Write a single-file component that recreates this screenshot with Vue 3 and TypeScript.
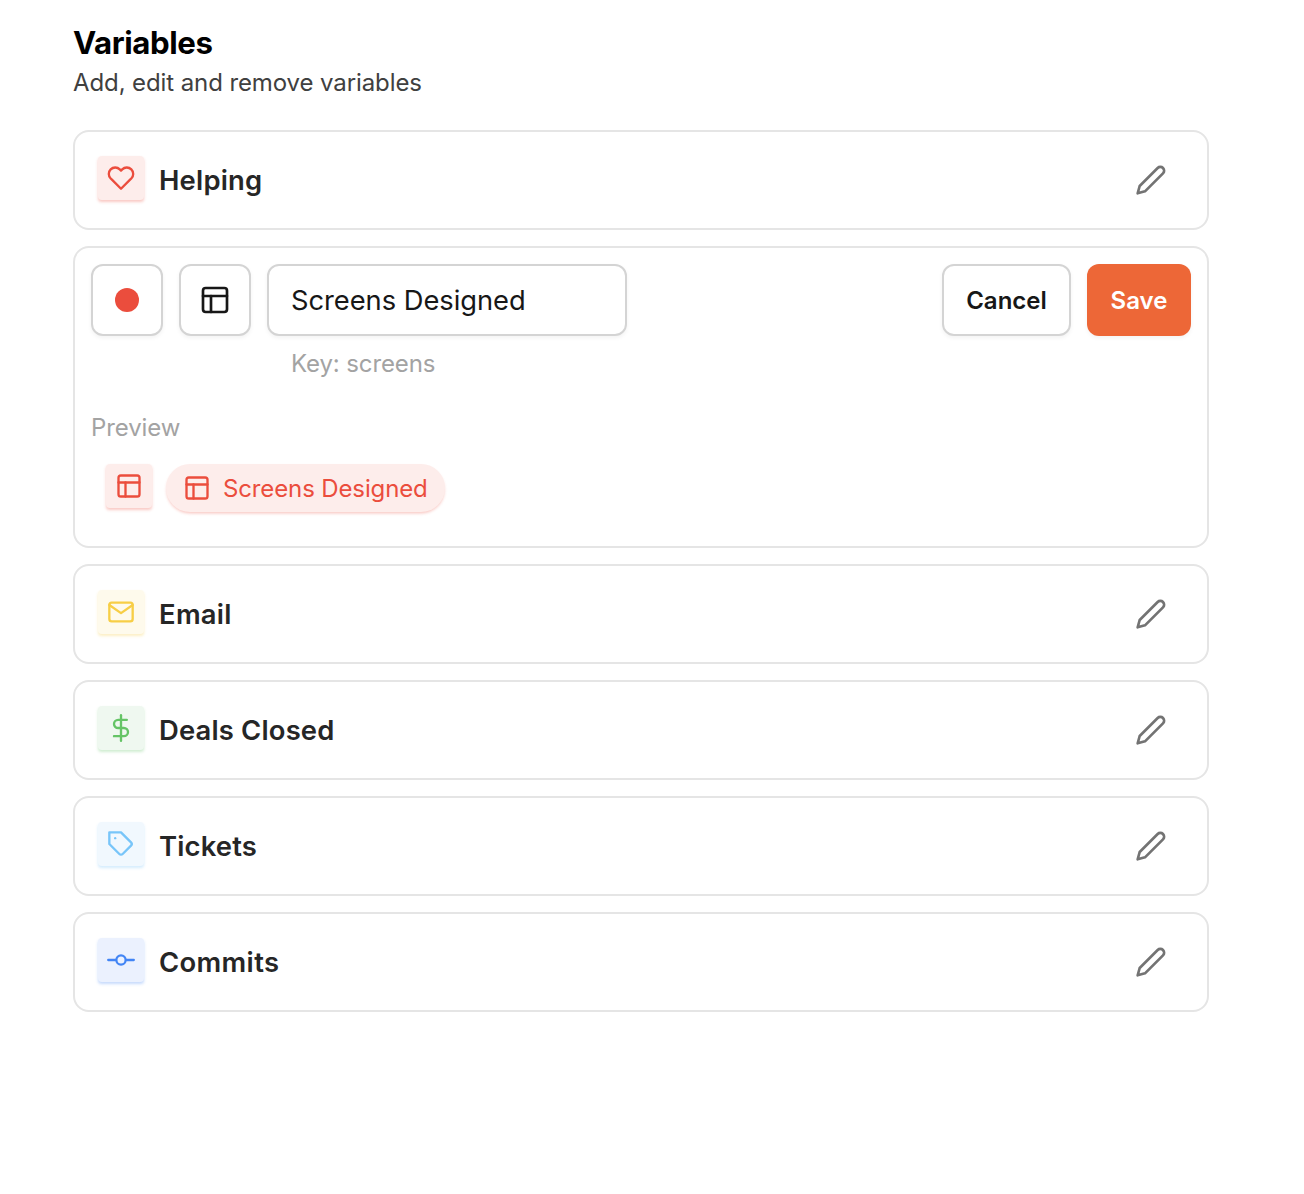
<script setup lang="ts">
import { ref } from 'vue'

type IconName = 'heart' | 'layout' | 'mail' | 'dollar' | 'tag' | 'commit' | 'pencil'

interface Variable {
  key: string
  label: string
  icon: IconName
  tone: string
  spacing: string
}

const icons: Record<IconName, string[]> = {
  heart: [
    'M20.84 4.61a5.5 5.5 0 0 0-7.78 0L12 5.67l-1.06-1.06a5.5 5.5 0 0 0-7.78 7.78l1.06 1.06L12 21.23l7.78-7.78 1.06-1.06a5.5 5.5 0 0 0 0-7.78z',
  ],
  layout: [
    'M5 3h14a2 2 0 0 1 2 2v14a2 2 0 0 1-2 2H5a2 2 0 0 1-2-2V5a2 2 0 0 1 2-2z',
    'M3 9h18',
    'M9 21V9',
  ],
  mail: [
    'M4 4h16c1.1 0 2 .9 2 2v12c0 1.1-.9 2-2 2H4c-1.1 0-2-.9-2-2V6c0-1.1.9-2 2-2z',
    'M22 6l-10 7L2 6',
  ],
  dollar: ['M12 1v22', 'M17 5H9.5a3.5 3.5 0 0 0 0 7h5a3.5 3.5 0 0 1 0 7H6'],
  tag: [
    'M20.59 13.41l-7.17 7.17a2 2 0 0 1-2.83 0L2 12V2h10l8.59 8.59a2 2 0 0 1 0 2.82z',
    'M7 7h.01',
  ],
  commit: ['M8 12a4 4 0 1 0 8 0a4 4 0 1 0-8 0', 'M1.05 12H7', 'M17.01 12h5.95'],
  pencil: ['M17 3a2.828 2.828 0 1 1 4 4L7.5 20.5 2 22l1.5-5.5L17 3z'],
}

const variables: Variable[] = [
  { key: 'helping', label: 'Helping', icon: 'heart', tone: 'red', spacing: '0.2px' },
  { key: 'screens', label: 'Screens Designed', icon: 'layout', tone: 'red', spacing: '0px' },
  { key: 'email', label: 'Email', icon: 'mail', tone: 'yellow', spacing: '0.3px' },
  { key: 'deals', label: 'Deals Closed', icon: 'dollar', tone: 'green', spacing: '0.17px' },
  { key: 'tickets', label: 'Tickets', icon: 'tag', tone: 'sky', spacing: '0.15px' },
  { key: 'commits', label: 'Commits', icon: 'commit', tone: 'blue', spacing: '0.36px' },
]

const editing = ref('screens')
const draft = ref('Screens Designed')
</script>

<template>
  <main class="page">
    <h1 class="title">Variables</h1>
    <p class="subtitle">Add, edit and remove variables</p>

    <div class="list">
      <template v-for="v in variables" :key="v.key">
        <section v-if="v.key === editing" class="card editor">
          <div class="controls">
            <button class="field square" aria-label="Color"><span class="dot"></span></button>
            <button class="field square" aria-label="Icon">
              <svg class="icon big" viewBox="0 0 24 24"><path v-for="d in icons[v.icon]" :key="d" :d="d" /></svg>
            </button>
            <input v-model="draft" class="field name" type="text" />
            <button class="field cancel">Cancel</button>
            <button class="save" @click="editing = ''">Save</button>
          </div>
          <p class="key">Key: {{ v.key }}</p>
          <p class="preview-label">Preview</p>
          <div class="preview">
            <span class="badge" :class="v.tone">
              <svg class="icon" viewBox="0 0 24 24"><path v-for="d in icons[v.icon]" :key="d" :d="d" /></svg>
            </span>
            <span class="pill" :class="v.tone">
              <svg class="icon" viewBox="0 0 24 24"><path v-for="d in icons[v.icon]" :key="d" :d="d" /></svg>
              <span>{{ draft }}</span>
            </span>
          </div>
        </section>

        <section v-else class="card row">
          <span class="badge" :class="v.tone">
            <svg class="icon" viewBox="0 0 24 24"><path v-for="d in icons[v.icon]" :key="d" :d="d" /></svg>
          </span>
          <h2 class="label" :style="{ letterSpacing: v.spacing }">{{ v.label }}</h2>
          <button class="edit" aria-label="Edit" @click="editing = v.key">
            <svg class="icon big" viewBox="0 0 24 24"><path v-for="d in icons.pencil" :key="d" :d="d" /></svg>
          </button>
        </section>
      </template>
    </div>
  </main>
</template>

<style>
body {
  margin: 0;
  background: #fff;
}
</style>

<style scoped>
* {
  box-sizing: border-box;
}
.page {
  width: 1304px;
  min-height: 1194px;
  padding: 23px 95px 0 73px;
  font-family: Inter, 'Liberation Sans', sans-serif;
  color: #171717;
}
h1,
h2,
p {
  margin: 0;
}
button,
input {
  font: inherit;
  color: inherit;
  background: none;
  border: 0;
  padding: 0;
  margin: 0;
}
.title {
  font-size: 31.2px;
  line-height: 40px;
  font-weight: 650;
  letter-spacing: -0.4px;
  color: #000;
}
.subtitle {
  font-size: 24px;
  line-height: 40px;
  letter-spacing: -0.1px;
  color: #404040;
}
.list {
  display: flex;
  flex-direction: column;
  gap: 16px;
  margin-top: 27px;
}
.card {
  border: 2px solid #e5e5e5;
  border-radius: 16px;
  background: #fff;
}
.row {
  display: flex;
  align-items: center;
  height: 100px;
  padding: 0 40px 0 23px;
}
.icon {
  display: block;
  width: 28px;
  height: 28px;
  fill: none;
  stroke: currentColor;
  stroke-width: 2;
  stroke-linecap: round;
  stroke-linejoin: round;
}
.icon.big {
  width: 32px;
  height: 32px;
}
.badge {
  display: flex;
  align-items: center;
  justify-content: center;
  width: 46px;
  height: 44px;
  border-radius: 4px;
}
.row .badge {
  margin-bottom: 4px;
}
.label {
  flex: 1;
  margin-left: 15px;
  font-size: 27.4px;
  line-height: 40px;
  font-weight: 600;
  color: #262626;
}
.edit {
  color: #737373;
}
.red {
  color: #eb4d3d;
  background: #fdedeb;
  box-shadow: 0 2px 3px -0.5px rgba(235, 77, 61, 0.3);
}
.yellow {
  color: #f7ce46;
  background: #fefaec;
  box-shadow: 0 2px 3px -0.5px rgba(247, 206, 70, 0.32);
}
.green {
  color: #65c466;
  background: #eff8f0;
  box-shadow: 0 2px 3px -0.5px rgba(101, 196, 102, 0.3);
}
.sky {
  color: #78c5f9;
  background: #f1f8fe;
  box-shadow: 0 2px 3px -0.5px rgba(120, 197, 249, 0.32);
}
.blue {
  color: #4285f5;
  background: #ebf1fe;
  box-shadow: 0 2px 3px -0.5px rgba(66, 133, 245, 0.3);
}
.editor {
  height: 302px;
  padding: 16px;
}
.controls {
  display: flex;
  gap: 16px;
}
.field {
  height: 72px;
  border: 2px solid #d4d4d4;
  border-radius: 12px;
  background: #fff;
  box-shadow: 0 2px 4px rgba(0, 0, 0, 0.05);
}
.square {
  display: flex;
  align-items: center;
  justify-content: center;
  width: 72px;
}
.dot {
  width: 24px;
  height: 24px;
  border-radius: 50%;
  background: #eb4d3d;
}
.name {
  width: 360px;
  padding: 0 22px;
  font-size: 27.3px;
  letter-spacing: -0.03px;
  outline: none;
}
.cancel {
  width: 129px;
  margin-left: auto;
  font-size: 24px;
  font-weight: 600;
}
.save {
  width: 104px;
  height: 72px;
  border-radius: 12px;
  background: #ed6737;
  color: #fff;
  font-size: 24px;
  font-weight: 600;
  box-shadow: 0 2px 4px rgba(0, 0, 0, 0.05);
}
.key {
  margin: 12px 0 0 200px;
  font-size: 24px;
  line-height: 32px;
  letter-spacing: -0.12px;
  color: #a3a3a3;
}
.preview-label {
  margin-top: 32px;
  font-size: 24px;
  line-height: 32px;
  letter-spacing: -0.12px;
  color: #a3a3a3;
}
.preview {
  display: flex;
  align-items: flex-start;
  gap: 14px;
  margin: 20px 0 0 15px;
}
.pill {
  display: flex;
  align-items: center;
  gap: 12px;
  width: 279px;
  height: 48px;
  padding-left: 17px;
  border-radius: 24px;
  font-size: 24px;
  letter-spacing: -0.13px;
  white-space: nowrap;
}
</style>
